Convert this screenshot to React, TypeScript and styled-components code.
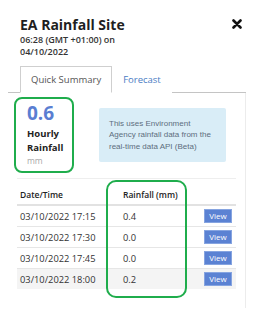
import styled, { createGlobalStyle } from "styled-components";

const GlobalStyle = createGlobalStyle`
  body {
    margin: 0;
    background: #ffffff;
    font-family: 'Open Sans', 'Liberation Sans', sans-serif;
    color: #333333;
  }
`;

const readings = [
  { time: "03/10/2022 17:15", value: "0.4" },
  { time: "03/10/2022 17:30", value: "0.0" },
  { time: "03/10/2022 17:45", value: "0.0" },
  { time: "03/10/2022 18:00", value: "0.2" },
];

function CloseIcon() {
  return (
    <svg width="10" height="10" viewBox="0 0 10 10">
      <path d="M1.5 1.5 L8.5 8.5 M8.5 1.5 L1.5 8.5" stroke="#111" strokeWidth="2.6" strokeLinecap="round" />
    </svg>
  );
}

function App() {
  return (
    <>
      <GlobalStyle />
      <Popup>
        <Header>
          <Title>EA Rainfall Site</Title>
          <CloseButton><CloseIcon /></CloseButton>
        </Header>
        <Subtitle>
          06:28 (GMT +01:00) on
          <br />
          04/10/2022
        </Subtitle>

        <TabList>
          <Tab active>Quick Summary</Tab>
          <Tab>Forecast</Tab>
        </TabList>

        <Panel>
          <SummaryRow>
            <StatBox>
              <StatValue>0.6</StatValue>
              <StatLabel>Hourly</StatLabel>
              <StatLabel>Rainfall</StatLabel>
              <StatUnit>mm</StatUnit>
            </StatBox>
            <InfoBox>
              This uses Environment Agency rainfall data from the real-time data API (Beta)
            </InfoBox>
          </SummaryRow>

          <TableWrap>
            <Table>
              <thead>
                <tr>
                  <Th>Date/Time</Th>
                  <Th>Rainfall (mm)</Th>
                  <Th />
                </tr>
              </thead>
              <tbody>
                {readings.map((r, i) => (
                  <Row key={r.time} shaded={i === readings.length - 1}>
                    <Td>{r.time}</Td>
                    <Td>{r.value}</Td>
                    <ButtonCell>
                      <ViewButton>View</ViewButton>
                    </ButtonCell>
                  </Row>
                ))}
              </tbody>
            </Table>
            <ColumnHighlight />
          </TableWrap>
        </Panel>
      </Popup>
    </>
  );
}

const Popup = styled.div`
  width: 254px;
  height: 317px;
  background: #ffffff;
  overflow: hidden;
`;

const Header = styled.div`
  display: flex;
  justify-content: space-between;
  align-items: flex-start;
  padding: 16px 12px 0 20px;
`;

const Title = styled.h1`
  margin: 0;
  font-size: 14px;
  line-height: 17px;
  font-weight: 700;
  color: #1f1f1f;
`;

const CloseButton = styled.div`
  width: 10px;
  height: 10px;
  margin-top: 3px;
  display: flex;
`;

const Subtitle = styled.div`
  padding: 1px 0 0 20px;
  font-size: 9px;
  line-height: 12px;
  font-weight: 600;
  color: #333333;
`;

const TabList = styled.div`
  display: flex;
  margin: 8px 8px 0;
  padding-left: 12px;
  border-bottom: 1px solid #c4c4c4;
`;

const Tab = styled.div<{ active?: boolean }>`
  padding: 6px 10px;
  margin-bottom: -1px;
  font-size: 9.5px;
  line-height: 13px;
  border: 1px solid ${(p) => (p.active ? "#cfcfcf" : "transparent")};
  border-bottom-color: ${(p) => (p.active ? "#ffffff" : "transparent")};
  background: #ffffff;
  color: ${(p) => (p.active ? "#555555" : "#4a7cc4")};
`;

const Panel = styled.div`
  margin: 0 8px;
  height: 211px;
  padding: 4px 9px 0 6px;
  border-right: 1px solid #ececec;
`;

const SummaryRow = styled.div`
  display: flex;
  align-items: center;
  margin-bottom: 5px;
`;

const StatBox = styled.div`
  width: 60px;
  height: 76px;
  box-sizing: border-box;
  border: 2px solid #1fad4c;
  border-radius: 8px;
  padding: 1px 0 0 11px;
`;

const StatValue = styled.div`
  font-size: 19px;
  line-height: 26px;
  font-weight: 700;
  color: #5a7ed2;
  margin-bottom: 1px;
`;

const StatLabel = styled.div`
  font-size: 9.5px;
  line-height: 14px;
  font-weight: 700;
  color: #222222;
`;

const StatUnit = styled.div`
  font-size: 8.5px;
  line-height: 12px;
  color: #a9a9a9;
`;

const InfoBox = styled.div`
  margin-left: 25px;
  width: 127px;
  box-sizing: border-box;
  padding: 9.5px 10px 10px;
  background: #d9edf7;
  border-radius: 2px;
  font-family: 'Liberation Sans', Arial, sans-serif;
  font-size: 8px;
  line-height: 11.5px;
  color: #5d6e7e;
`;

const TableWrap = styled.div`
  position: relative;
  margin-left: 3px;
  border-top: 1px solid #eeeeee;
`;

const Table = styled.table`
  width: 100%;
  border-collapse: collapse;
`;

const Th = styled.th`
  height: 22px;
  padding: 0 3px 3px;
  vertical-align: bottom;
  text-align: left;
  font-size: 8.5px;
  line-height: 12px;
  font-weight: 600;
  color: #222222;
  border-bottom: 2px solid #e2e2e2;

  &:first-child {
    width: 97px;
  }
`;

const Row = styled.tr<{ shaded?: boolean }>`
  background: ${(p) => (p.shaded ? "#f4f4f4" : "#ffffff")};
  border-top: 1px solid #e6e6e6;
`;

const Td = styled.td`
  height: 20px;
  padding: 0 3px;
  font-size: 9.3px;
  line-height: 13px;
  color: #333333;
  vertical-align: middle;
`;

const ButtonCell = styled(Td)`
  text-align: right;
  padding-right: 4px;
`;

const ViewButton = styled.span`
  display: inline-block;
  width: 28px;
  height: 14px;
  box-sizing: border-box;
  background: #5b82d3;
  border: 1px solid #86a4e0;
  color: #ffffff;
  font-size: 8px;
  line-height: 12px;
  text-align: center;
  vertical-align: middle;
`;

const ColumnHighlight = styled.div`
  position: absolute;
  left: 89px;
  top: 1px;
  width: 81px;
  height: 118px;
  box-sizing: border-box;
  border: 2px solid #1fad4c;
  border-radius: 10px;
  pointer-events: none;
`;

export default App;
